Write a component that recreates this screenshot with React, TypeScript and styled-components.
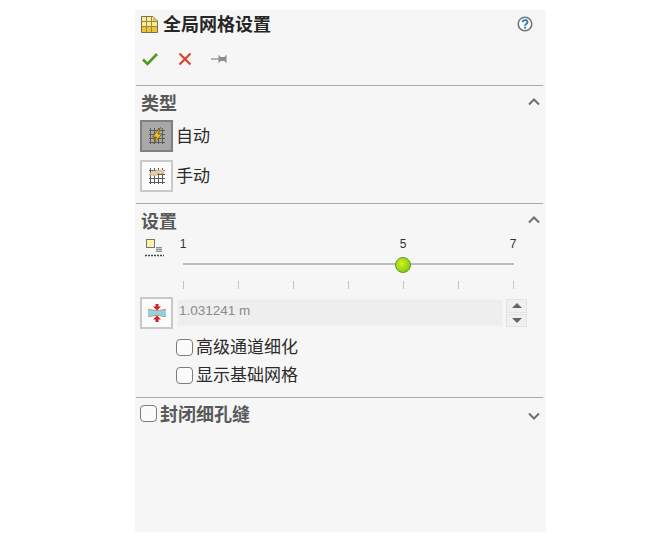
import styled, { createGlobalStyle } from "styled-components";

const GlobalStyle = createGlobalStyle`
  html, body {
    margin: 0;
    padding: 0;
    background: #fff;
  }
  body {
    font-family: "Noto Sans CJK SC", "Liberation Sans", sans-serif;
  }
`;

const SLIDER_STEP = 55;

function App() {
  return (
    <Page>
      <GlobalStyle />
      <Panel>
        <TitleRow>
          <svg width="19" height="19" viewBox="0 0 19 19">
            <path d="M1.500 1.500h11.500l4.500 4.500v11.500H1.500z" fill="#fdeb94" stroke="#77705a" />
            <path d="M2 11.500h15v5.500H2z" fill="#efc432" />
            <path d="M6.500 2v15M11.500 2v15M2 6.500h15M2 11.500h15" stroke="#94864e" strokeWidth="1" fill="none" />
            <path d="M13 1.500l4.500 4.500H13z" fill="#dcc25c" />
          </svg>
          <Title>全局网格设置</Title>
          <svg width="16" height="16" viewBox="0 0 16 16">
            <circle cx="8" cy="8" r="6.800" fill="#fff" stroke="#6f7679" strokeWidth="1.600" />
            <path d="M5.600 6.200C5.700 3.400 10.500 3.400 10.500 6c0 1.900-2.500 1.900-2.500 3.700" fill="none" stroke="#2e7fae" strokeWidth="1.900" />
            <rect x="7.100" y="10.700" width="1.900" height="1.900" fill="#2e7fae" />
          </svg>
        </TitleRow>
        <ActionRow>
          <svg width="18" height="16" viewBox="0 0 18 16">
            <path d="M2 8.500l4.500 4.500L16 3" fill="none" stroke="#4f9a1f" strokeWidth="2.600" />
          </svg>
          <svg width="14" height="14" viewBox="0 0 14 14">
            <path d="M1.500 1.500l11 11M12.500 1.500l-11 11" fill="none" stroke="#d8452b" strokeWidth="2.200" />
          </svg>
          <svg width="17" height="12" viewBox="0 0 17 12">
            <path d="M0 6h8" stroke="#9a9a9a" strokeWidth="1.400" />
            <path d="M7.500 1.500l2 2.500h4l2-2.500v9l-2-2.500h-4l-2 2.500z" fill="#8d8d8d" />
          </svg>
        </ActionRow>
        <Divider />
        <SectionHeader $height={34} $pad={6}>
          <SectionTitle>类型</SectionTitle>
          <Chevron />
        </SectionHeader>
        <TypeRow>
          <IconButton $active>
            <GridIcon>
              <path d="M12.500 0.500L4.500 10h4L5.500 16.500 14 7H10z" fill="#f4c51c" stroke="#6d5310" strokeWidth="0.800" />
            </GridIcon>
          </IconButton>
          <OptionLabel>自动</OptionLabel>
        </TypeRow>
        <TypeRow>
          <IconButton>
            <GridIcon>
              <path d="M1 7.500c3-3.500 7-5 15-4.500v3.500H10L7.500 9z" fill="#e8c9a6" stroke="#c9a582" strokeWidth="0.500" />
            </GridIcon>
          </IconButton>
          <OptionLabel>手动</OptionLabel>
        </TypeRow>
        <Divider $top={3} />
        <SectionHeader $height={31} $pad={6}>
          <SectionTitle>设置</SectionTitle>
          <Chevron />
        </SectionHeader>
        <SliderBlock>
          <SizeIcon width="19" height="20" viewBox="0 0 19 20">
            <rect x="1.500" y="0.500" width="8" height="8" fill="#fdf3ad" stroke="#77756a" />
            <rect x="11" y="8" width="6" height="5" fill="#8d918d" />
            <path d="M11 9.500h6M11 11.500h6" stroke="#e5e5e5" strokeWidth="0.700" />
            <path d="M0 16.500h19" stroke="#444" strokeWidth="1.600" strokeDasharray="2 1" />
          </SizeIcon>
          <Slider>
            <SliderLabels>
              <SliderLabel $step={0}>1</SliderLabel>
              <SliderLabel $step={4}>5</SliderLabel>
              <SliderLabel $step={6}>7</SliderLabel>
            </SliderLabels>
            <Track>
              <Thumb />
            </Track>
            <Ticks>
              {[0, 1, 2, 3, 4, 5, 6].map((tick) => (
                <Tick key={tick} />
              ))}
            </Ticks>
          </Slider>
        </SliderBlock>
        <InputRow>
          <IconButton>
            <svg width="20" height="18" viewBox="0 0 20 18">
              <path d="M1 5.500c4 0 5 1 9 1s5-1 9-1v7c-4 0-5-1-9-1s-5 1-9 1z" fill="#8fd0ee" />
              <path d="M1 5.500c4 0 5 1 9 1s5-1 9-1M1 12.500c4 0 5-1 9-1s5 1 9 1" fill="none" stroke="#c49a52" strokeWidth="1" />
              <path d="M8.500 0h3v2.500H14L10 6.500 6 2.500h2.500zM10 11.500l4 4h-2.500V18h-3v-2.500H6z" fill="#d3202c" />
            </svg>
          </IconButton>
          <ValueInput>1.031241 m</ValueInput>
          <Spinner>
            <SpinButton>
              <SpinArrow $up />
            </SpinButton>
            <SpinButton>
              <SpinArrow />
            </SpinButton>
          </Spinner>
        </InputRow>
        <CheckList>
          <CheckRow>
            <CheckBox />
            <OptionLabel>高级通道细化</OptionLabel>
          </CheckRow>
          <CheckRow>
            <CheckBox />
            <OptionLabel>显示基础网格</OptionLabel>
          </CheckRow>
        </CheckList>
        <Divider $top={8} />
        <CollapsedHeader>
          <CollapsedTitle>
            <CheckBox />
            <SectionTitle>封闭细孔缝</SectionTitle>
          </CollapsedTitle>
          <Chevron $down />
        </CollapsedHeader>
      </Panel>
    </Page>
  );
}

function GridIcon({ children }: { children: React.ReactNode }) {
  return (
    <svg width="18" height="18" viewBox="0 0 18 18">
      <path
        d="M1 3.500h16M1 7.500h16M1 11.500h16M1 15.500h16M2.500 1v16M6.500 1v16M10.500 1v16M14.500 1v16"
        fill="none"
        stroke="#5c5c5c"
        strokeWidth="1"
      />
      {children}
    </svg>
  );
}

function Chevron({ $down }: { $down?: boolean }) {
  return (
    <ChevronIcon width="12" height="8" viewBox="0 0 12 8">
      <path
        d={$down ? "M1 1.500l5 5 5-5" : "M1 6.500l5-5 5 5"}
        fill="none"
        stroke="#6f6f6f"
        strokeWidth="2"
      />
    </ChevronIcon>
  );
}

export default App;

const Page = styled.div`
  width: 667px;
  height: 537px;
  padding: 10px 0 5px 135px;
  box-sizing: border-box;
  overflow: hidden;
  background: #fff;
`;
const Panel = styled.div`
  width: 411px;
  height: 522px;
  background: #f6f6f6;
  display: flex;
  flex-direction: column;
`;
const TitleRow = styled.div`
  display: flex;
  align-items: center;
  height: 28px;
  padding: 0 13px 0 5px;
`;
const Title = styled.h1`
  flex: 1;
  margin: 0 0 2px 4px;
  font-size: 18px;
  font-weight: 700;
  line-height: 26px;
  color: #262626;
`;
const ActionRow = styled.div`
  display: flex;
  align-items: center;
  gap: 19px;
  height: 38px;
  padding: 2px 0 0 6px;
`;
const Divider = styled.div<{ $top?: number }>`
  height: 1px;
  flex: none;
  width: 407px;
  margin: ${(props) => props.$top ?? 7}px 0 0 1px;
  background: #aaaaaa;
`;
const SectionHeader = styled.div<{ $height: number; $pad: number }>`
  display: flex;
  align-items: flex-start;
  justify-content: space-between;
  box-sizing: border-box;
  height: ${(props) => props.$height}px;
  padding: ${(props) => props.$pad}px 6px 0;
`;
const SectionTitle = styled.span`
  font-size: 18px;
  font-weight: 700;
  line-height: 20px;
  color: #595959;
`;
const ChevronIcon = styled.svg`
  display: block;
  margin-top: 6px;
`;
const TypeRow = styled.div`
  display: flex;
  align-items: center;
  gap: 3px;
  padding-left: 5px;
  margin-bottom: 8px;
`;
const IconButton = styled.div<{ $active?: boolean }>`
  display: flex;
  align-items: center;
  justify-content: center;
  flex: none;
  box-sizing: border-box;
  width: 33px;
  height: 32px;
  border: 2px solid ${(props) => (props.$active ? "#808080" : "#c9c9c9")};
  background: ${(props) => (props.$active ? "#a8a8a8" : "#fbfbfb")};
`;
const OptionLabel = styled.span`
  margin-bottom: 3px;
  font-size: 17px;
  line-height: 22px;
  color: #2b2b2b;
`;
const SliderBlock = styled.div`
  display: flex;
  height: 62px;
  padding-left: 10px;
`;
const SizeIcon = styled.svg`
  flex: none;
  margin-top: 4px;
`;
const Slider = styled.div`
  width: 331px;
  margin-left: 19px;
  display: flex;
  flex-direction: column;
`;
const SliderLabels = styled.div`
  display: grid;
  grid-template-columns: repeat(7, ${SLIDER_STEP}px);
  height: 19px;
`;
const SliderLabel = styled.span<{ $step: number }>`
  grid-column: ${(props) => props.$step + 1};
  width: 0;
  display: flex;
  justify-content: center;
  font-family: "Liberation Sans", sans-serif;
  font-size: 12px;
  line-height: 19px;
  color: #333333;
`;
const Track = styled.div`
  position: relative;
  height: 2px;
  margin-top: 9px;
  background: #bdbdbd;
`;
const Thumb = styled.div`
  position: absolute;
  left: ${SLIDER_STEP * 4 - 8}px;
  top: -6px;
  box-sizing: border-box;
  width: 16px;
  height: 16px;
  border-radius: 50%;
  border: 1px solid #5c9a1c;
  background: radial-gradient(circle at 40% 40%, #d8f020, #84cc14 75%);
`;
const Ticks = styled.div`
  display: flex;
  justify-content: space-between;
  margin-top: 16px;
`;
const Tick = styled.div`
  width: 1px;
  height: 8px;
  background: #c4c4c4;
`;
const InputRow = styled.div`
  display: flex;
  align-items: stretch;
  height: 32px;
  padding-left: 5px;
`;
const ValueInput = styled.div`
  box-sizing: border-box;
  width: 326px;
  height: 27px;
  margin: 2px 0 0 4px;
  padding-left: 1px;
  background: #eeeeee;
  border: 1px solid #f2f2f2;
  font-family: "Liberation Sans", sans-serif;
  font-size: 13.5px;
  line-height: 21px;
  color: #8a8a8a;
`;
const Spinner = styled.div`
  display: flex;
  flex-direction: column;
  gap: 1px;
  width: 21px;
  height: 28px;
  margin: 2px 0 0 3px;
`;
const SpinButton = styled.div`
  flex: 1;
  display: flex;
  align-items: center;
  justify-content: center;
  border: 1px solid #e2e2e2;
  background: #f0f0f0;
`;
const SpinArrow = styled.div<{ $up?: boolean }>`
  width: 0;
  height: 0;
  border-left: 5px solid transparent;
  border-right: 5px solid transparent;
  ${(props) =>
    props.$up ? "border-bottom: 5px solid #666;" : "border-top: 5px solid #666;"}
`;
const CheckList = styled.div`
  margin-top: 4px;
`;
const CheckRow = styled.div`
  display: flex;
  align-items: center;
  gap: 3px;
  height: 28px;
  padding-left: 41px;
`;
const CheckBox = styled.div`
  flex: none;
  box-sizing: border-box;
  width: 17px;
  height: 17px;
  border: 1.5px solid #7c7c7c;
  border-radius: 4px;
  background: #fbfbfb;
`;
const CollapsedHeader = styled.div`
  display: flex;
  align-items: center;
  justify-content: space-between;
  height: 30px;
  padding: 0 6px 0 5px;
`;
const CollapsedTitle = styled.div`
  display: flex;
  align-items: center;
  gap: 3px;
`;
